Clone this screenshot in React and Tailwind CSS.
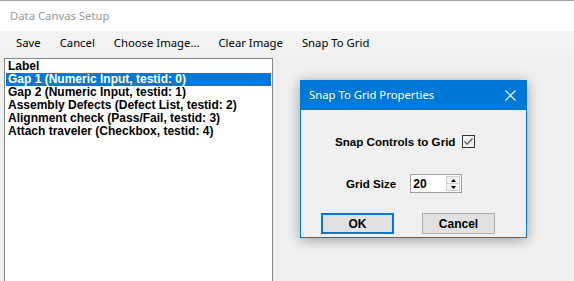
import React from "react";

const items = [
    "Label",
    "Gap 1 (Numeric Input, testid: 0)",
    "Gap 2 (Numeric Input, testid: 1)",
    "Assembly Defects (Defect List, testid: 2)",
    "Alignment check (Pass/Fail, testid: 3)",
    "Attach traveler (Checkbox, testid: 4)",
];

const menu = ["Save", "Cancel", "Choose Image...", "Clear Image", "Snap To Grid"];

export default function App() {
    const ui = { fontFamily: '"Noto Sans", "Open Sans", sans-serif' };
    const bold = { fontFamily: '"Liberation Sans", Arial, sans-serif' };

    return (
        <div className="w-[574px] h-[281px] overflow-hidden flex flex-col bg-[#f0f0f0] border-t border-[#a0a0a0]" style={ui}>
            {/* Title bar */}
            <div className="h-[30px] bg-white flex items-center pl-[10px] text-[11.3px] text-[#999999] shrink-0">
                Data Canvas Setup
            </div>

            {/* Menu */}
            <div className="h-[24px] bg-[#f3f3f3] flex items-center pl-[9px] text-[11.3px] text-black shrink-0">
                {menu.map(m => (
                    <span key={m} className="px-[7px] mr-[5px]">{m}</span>
                ))}
            </div>

            {/* Body */}
            <div className="relative flex-1 pl-[4px] pt-[3px]">
                <div className="w-[269px] h-[240px] bg-white border border-[#828790] p-[1px]" style={bold}>
                    {items.map((it, i) => (
                        <div
                            key={it}
                            className={`h-[13px] leading-[13px] pl-[2px] text-[12px] font-bold whitespace-nowrap ${i === 1 ? "bg-[#0078d7] text-white" : "text-black"}`}
                        >
                            {it}
                        </div>
                    ))}
                </div>

                {/* Dialog */}
                <div className="absolute left-[300px] top-[25px] w-[227px] h-[158px] bg-[#f0f0f0] border border-[#0078d7] shadow-[0_2px_12px_rgba(0,0,0,0.35)] flex flex-col">
                    <div className="h-[29px] bg-[#0078d7] flex items-center justify-between pl-[8px] pr-[10px] text-white text-[11.3px] shrink-0">
                        <span>Snap To Grid Properties</span>
                        <svg width="11" height="11" viewBox="0 0 11 11">
                            <path d="M0.5 0.5 L10.5 10.5 M10.5 0.5 L0.5 10.5" stroke="white" strokeWidth="1.1" />
                        </svg>
                    </div>
                    <div className="flex-1 flex flex-col text-[11.6px] font-bold text-black" style={bold}>
                        <div className="flex items-center mt-[23px] pl-[34px]">
                            <span>Snap Controls to Grid</span>
                            <span className="ml-[7px] w-[13px] h-[13px] border border-[#333333] bg-[#f0f0f0] flex items-center justify-center">
                                <svg width="11" height="11" viewBox="0 0 11 11">
                                    <path d="M1.5 5.5 L4.2 8.2 L9.5 2.5" stroke="#555" strokeWidth="1.2" fill="none" />
                                </svg>
                            </span>
                        </div>
                        <div className="flex items-center mt-[24px] pl-[45px]">
                            <span>Grid Size</span>
                            <div className="ml-[14px] w-[52px] h-[19px] bg-white border border-[#a0a0a0] flex items-center justify-between">
                                <span className="pl-[2px] text-[12px] font-bold">20</span>
                                <div className="w-[14px] h-[15px] mr-[1px] flex flex-col border border-[#cfcfcf]">
                                    <div className="flex-1 bg-[#f2f2f2] flex items-center justify-center border-b border-[#cfcfcf]">
                                        <svg width="5" height="3" viewBox="0 0 5 3"><path d="M2.5 0 L5 3 L0 3 Z" fill="#000" /></svg>
                                    </div>
                                    <div className="flex-1 bg-[#f2f2f2] flex items-center justify-center">
                                        <svg width="5" height="3" viewBox="0 0 5 3"><path d="M0 0 L5 0 L2.5 3 Z" fill="#000" /></svg>
                                    </div>
                                </div>
                            </div>
                        </div>
                        <div className="flex mt-[20px] pl-[20px] gap-[28px]">
                            <button className="w-[73px] h-[21px] bg-[#e1e1e1] border-2 border-[#0078d7] text-[12px] font-bold">OK</button>
                            <button className="w-[73px] h-[21px] bg-[#e1e1e1] border border-[#adadad] text-[12px] font-bold">Cancel</button>
                        </div>
                    </div>
                </div>
            </div>
        </div>
    );
}
